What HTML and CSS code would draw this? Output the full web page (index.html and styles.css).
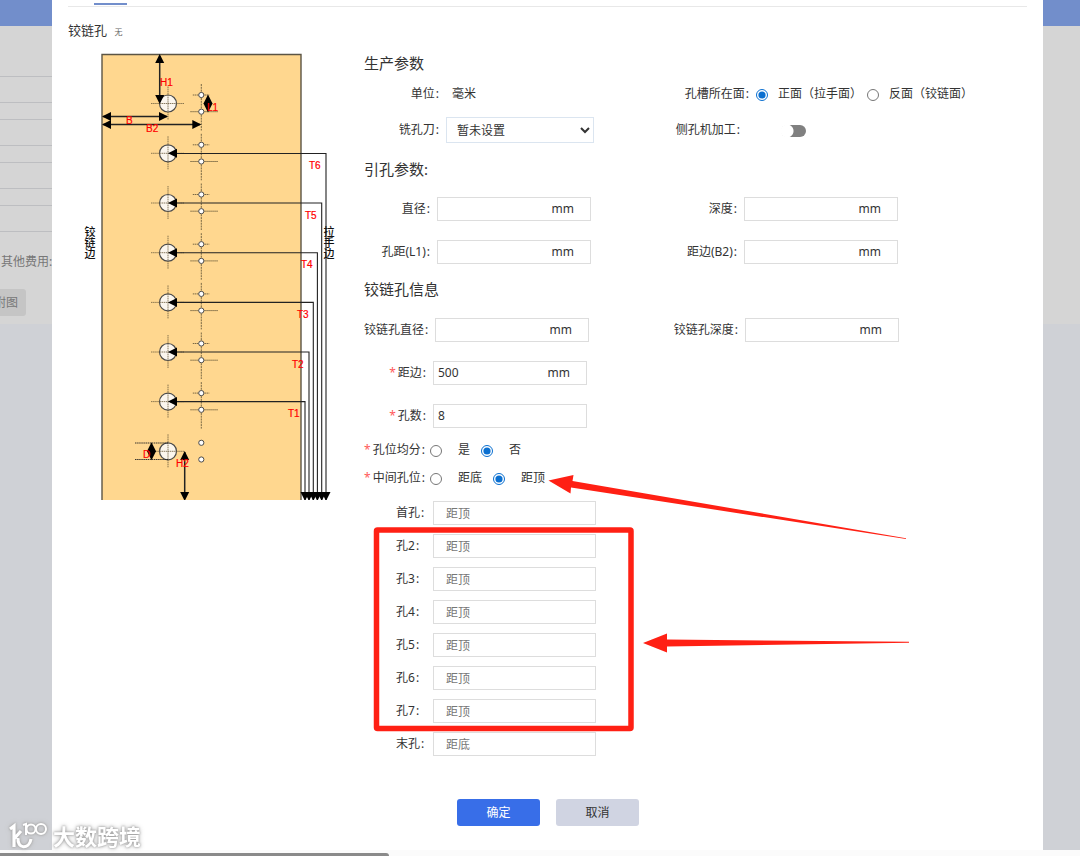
FILE: index.html
```html
<!DOCTYPE html>
<html lang="zh-CN">
<head>
<meta charset="utf-8">
<title>铰链孔</title>
<link rel="stylesheet" href="styles.css">
</head>
<body>
<div class="page">
  <aside class="backdrop backdrop-left">
    <div class="topbar"></div>
    <div class="sheet">
      <div class="line tall"></div><div class="line mid"></div><div class="line low"></div><div class="line mid"></div>
      <div class="line low"></div><div class="line mid"></div><div class="line low"></div><div class="line mid"></div>
      <p class="fees">其他费用:</p>
      <button class="attach" type="button">附图</button>
    </div>
  </aside>

  <main class="modal">
    <div class="tabs"><span class="tab-active"></span></div>
    <h1 class="title">铰链孔 <small>无</small></h1>
    <div class="body">
      <svg class="diagram" viewBox="80 50 260 450" role="img" aria-label="铰链孔示意图">
        <defs>
          <g id="cross"><circle r="8.5" fill="#fbf6ee" stroke="#4a4a4a" stroke-width="1.2"/><path d="M-17 0H16M0-17V16" stroke="#6b5c3c" stroke-width=".8" stroke-dasharray="1.5 .6" fill="none"/></g>
          <g id="dots" fill="#fff" stroke="#4a4a4a"><circle cy="-8.5" r="2.6"/><circle cy="8.2" r="2.6"/></g>
          <g id="axes" stroke="#6b5c3c" stroke-width=".9" fill="none"><path d="M0-19.500V27" stroke-dasharray="2 .8"/><path d="M-8.500-8.500H8M-11 8.200H17" stroke-dasharray="1.500 .5"/></g>
          <path id="left" d="M0 0L9-4.500V4.500Z"/>
          <path id="right" d="M0 0L-9-4.500V4.500Z"/>
          <path id="up" d="M0 0L-4.500 9H4.500Z"/>
          <path id="down" d="M0 0L-4.500-9H4.500Z"/>
          <path id="diamond" d="M0-9L4.500 0L0 9L-4.500 0Z"/>
        </defs>
        <path d="M102 500V54.500H301V500" fill="#ffd78f" stroke="#5c5545" stroke-width="1.400"/>
        <use href="#cross" x="168" y="103.500"/><use href="#cross" x="168" y="153.300"/><use href="#cross" x="168" y="203"/><use href="#cross" x="168" y="252.700"/>
        <use href="#cross" x="168" y="302.400"/><use href="#cross" x="168" y="352"/><use href="#cross" x="168" y="401.600"/><use href="#cross" x="168" y="451.300"/>
        <use href="#axes" x="201.300" y="103.500"/><use href="#axes" x="201.300" y="153.300"/><use href="#axes" x="201.300" y="203"/><use href="#axes" x="201.300" y="252.700"/>
        <use href="#axes" x="201.300" y="302.400"/><use href="#axes" x="201.300" y="352"/><use href="#axes" x="201.300" y="401.600"/>
        <use href="#dots" x="201.300" y="103.500"/><use href="#dots" x="201.300" y="153.300"/><use href="#dots" x="201.300" y="203"/><use href="#dots" x="201.300" y="252.700"/>
        <use href="#dots" x="201.300" y="302.400"/><use href="#dots" x="201.300" y="352"/><use href="#dots" x="201.300" y="401.600"/><use href="#dots" x="201.300" y="451.300"/>
        <g fill="none" stroke="#222" stroke-width="1.100">
          <path d="M170 153.500H326V500M170 203H321.700V500M170 252.700H317.400V500M170 302.400H313.300V500M170 352H309V500M170 401.600H305V500"/>
          <path d="M159.700 56V102M103 116.400H167M103 124.500H200M184.700 452V498" stroke-width="1.500"/>
          <path d="M135 443H168M135 459.500H168" stroke-width=".9" stroke-dasharray="1.500 .6"/>
        </g>
        <use href="#left" x="168" y="153.300"/><use href="#left" x="168" y="203"/><use href="#left" x="168" y="252.700"/><use href="#left" x="168" y="302.400"/><use href="#left" x="168" y="352"/><use href="#left" x="168" y="401.600"/>
        <use href="#down" x="326" y="501"/><use href="#down" x="321.700" y="501"/><use href="#down" x="317.400" y="501"/><use href="#down" x="313.300" y="501"/><use href="#down" x="309" y="501"/><use href="#down" x="305" y="501"/>
        <use href="#up" x="159.700" y="54"/><use href="#down" x="159.700" y="104"/>
        <use href="#left" x="102" y="116.400"/><use href="#right" x="168" y="116.400"/>
        <use href="#left" x="102" y="124.500"/><use href="#right" x="201.300" y="124.500"/>
        <use href="#up" x="184.700" y="451"/><use href="#down" x="184.700" y="501"/>
        <use href="#diamond" x="208" y="103.500"/><use href="#diamond" x="151.500" y="451.300"/>
        <g class="dim">
          <text x="160" y="86">H1</text><text x="207" y="111">L1</text><text x="126" y="124">B</text><text x="146" y="132">B2</text>
          <text x="309" y="169">T6</text><text x="305" y="219">T5</text><text x="301" y="268">T4</text><text x="297" y="318">T3</text><text x="292" y="368">T2</text><text x="288" y="417">T1</text>
          <text x="143" y="458">D</text><text x="176" y="467">H2</text>
        </g>
        <g class="edge"><text x="90" y="226">铰链边</text><text x="329" y="226">拉手边</text></g>
      </svg>

      <form class="form">
        <section class="production">
          <h2>生产参数</h2>
          <div class="pair">
            <div class="field"><span class="label">单位<i>:</i></span><span class="value">毫米</span></div>
            <div class="field" role="radiogroup" aria-label="孔槽所在面">
              <span class="label">孔槽所在面<i>:</i></span>
              <label class="choice tight"><input type="radio" name="face" checked>正面（拉手面）</label>
              <label class="choice tight"><input type="radio" name="face">反面（铰链面）</label>
            </div>
          </div>
          <div class="pair tool-row">
            <div class="field"><label class="label" for="tool">铣孔刀<i>:</i></label><select id="tool"><option>暂未设置</option></select></div>
            <div class="field side"><label class="label" for="side">侧孔机加工<i>:</i></label><input class="switch" id="side" type="checkbox"></div>
          </div>
        </section>

        <section class="pilot">
          <h2>引孔参数:</h2>
          <div class="pair">
            <div class="field"><label class="label" for="dia">直径<i>:</i></label><span class="box"><input id="dia" type="text"><b>mm</b></span></div>
            <div class="field"><label class="label" for="depth">深度<i>:</i></label><span class="box"><input id="depth" type="text"><b>mm</b></span></div>
          </div>
          <div class="pair">
            <div class="field"><label class="label" for="l1">孔距(L1)<i>:</i></label><span class="box"><input id="l1" type="text"><b>mm</b></span></div>
            <div class="field"><label class="label" for="b2">距边(B2)<i>:</i></label><span class="box"><input id="b2" type="text"><b>mm</b></span></div>
          </div>
        </section>

        <section class="hinge">
          <h2>铰链孔信息</h2>
          <div class="pair">
            <div class="field"><label class="label" for="hdia">铰链孔直径<i>:</i></label><span class="box"><input id="hdia" type="text"><b>mm</b></span></div>
            <div class="field"><label class="label" for="hdepth">铰链孔深度<i>:</i></label><span class="box"><input id="hdepth" type="text"><b>mm</b></span></div>
          </div>
          <div class="field"><label class="label" for="margin"><em>*</em>距边<i>:</i></label><span class="box"><input id="margin" type="text" value="500"><b>mm</b></span></div>
          <div class="field"><label class="label" for="count"><em>*</em>孔数<i>:</i></label><span class="box"><input id="count" type="text" value="8"></span></div>
        </section>

        <section class="options">
          <div class="field" role="radiogroup" aria-label="孔位均分">
            <span class="label"><em>*</em>孔位均分<i>:</i></span>
            <label class="choice"><input type="radio" name="even">是</label>
            <label class="choice"><input type="radio" name="even" checked>否</label>
          </div>
          <div class="field" role="radiogroup" aria-label="中间孔位">
            <span class="label"><em>*</em>中间孔位<i>:</i></span>
            <label class="choice"><input type="radio" name="middle">距底</label>
            <label class="choice"><input type="radio" name="middle" checked>距顶</label>
          </div>
        </section>

        <section class="holes">
          <div class="field"><label class="label" for="h1">首孔<i>:</i></label><input id="h1" type="text" placeholder="距顶"></div>
          <div class="field"><label class="label" for="h2">孔2<i>:</i></label><input id="h2" type="text" placeholder="距顶"></div>
          <div class="field"><label class="label" for="h3">孔3<i>:</i></label><input id="h3" type="text" placeholder="距顶"></div>
          <div class="field"><label class="label" for="h4">孔4<i>:</i></label><input id="h4" type="text" placeholder="距顶"></div>
          <div class="field"><label class="label" for="h5">孔5<i>:</i></label><input id="h5" type="text" placeholder="距顶"></div>
          <div class="field"><label class="label" for="h6">孔6<i>:</i></label><input id="h6" type="text" placeholder="距顶"></div>
          <div class="field"><label class="label" for="h7">孔7<i>:</i></label><input id="h7" type="text" placeholder="距顶"></div>
          <div class="field"><label class="label" for="h8">末孔<i>:</i></label><input id="h8" type="text" placeholder="距底"></div>
        </section>

        <div class="actions">
          <button class="ok" type="button">确定</button>
          <button class="cancel" type="button">取消</button>
        </div>

        <svg class="marks" viewBox="364 50 560 700" aria-hidden="true">
          <rect x="376.500" y="530" width="254.500" height="198.500" rx="1" fill="none" stroke="#ff2014" stroke-width="5.500" stroke-linejoin="round"/>
          <path fill="#ff2014" d="M548.500 480.500L573.500 475L572.500 481L906 538.200V539L571 487.500L570.500 493.500Z"/>
          <path fill="#ff2014" d="M643 643L667 633.500V639.500L909 641.800V642.800L667 646.500V652.500Z"/>
        </svg>
      </form>
    </div>
  </main>

  <aside class="backdrop backdrop-right"><div class="topbar"></div><div class="sheet"></div></aside>
  <div class="scrollbar"><div class="thumb"></div></div>

  <div class="watermark">
    <svg viewBox="0 0 40 30" aria-hidden="true">
      <path d="M2 8L6 5V26M6 18L13 10M10 17C9 28 21 29 23 18" fill="none" stroke="#fff" stroke-width="3.200"/>
      <path d="M15 4L18 3V14" fill="none" stroke="#fff" stroke-width="2"/>
      <circle cx="23" cy="8" r="4.500" fill="none" stroke="#fff" stroke-width="2"/>
      <circle cx="33" cy="8" r="5" fill="none" stroke="#fff" stroke-width="2"/>
    </svg>
    <span>大数跨境</span>
  </div>
</div>
</body>
</html>
```
FILE: styles.css
```css
* { box-sizing: border-box; }

body {
  margin: 0;
  background: #fbfbfb;
  color: #333;
  font: 12px/16px "Noto Sans", "Noto Sans CJK SC", sans-serif;
}

button, input, select { font: inherit; color: inherit; }
h1, h2, p { margin: 0; font-weight: 400; }
i, em { font-style: normal; }

.page {
  position: relative;
  display: grid;
  grid-template-columns: 52px 1fr 37px;
  grid-template-rows: 1fr auto;
  min-height: 100vh;
  overflow: hidden;
}

/* Dimmed page behind the dialog */
.backdrop { background: #cfd1d6; overflow: hidden; }
.topbar { height: 26px; background: #728ecb; }
.sheet { height: 298px; background: #d5d5d5; color: #777; }
.line { border-bottom: 1px solid #bdbec1; }
.tall { height: 51px; }
.mid { height: 26px; }
.low { height: 17px; }
.fees { padding: 22px 0 0 1px; white-space: nowrap; }
.attach {
  height: 27px;
  margin: 19px 0 0 -14px;
  padding: 0 8px;
  border: 0;
  border-radius: 3px;
  background: #c5c5c5;
}

/* Dialog */
.modal { background: #fff; padding: 0 16px 24px; }
.tabs { height: 7px; padding: 3px 0 0 26px; border-bottom: 1px solid #e8e8e8; }
.tab-active { display: block; width: 33px; height: 2px; background: #728ecb; }
.title { padding-top: 13px; font-size: 13px; line-height: 20px; }
.title small { margin-left: 4px; font-size: 8px; color: #666; }
.body { display: flex; gap: 24px; padding: 8px 0 0 12px; align-items: flex-start; }
.diagram { width: 260px; flex: none; }
.dim { font: 10px "Liberation Sans", sans-serif; fill: #f00; stroke: #f00; stroke-width: .2; }
.edge { font: 500 11px "Noto Sans CJK SC", sans-serif; fill: #111; writing-mode: vertical-rl; }

.form { position: relative; flex: 1; padding-top: 1px; }
h2 { font-size: 15px; line-height: 24px; }
.pair { display: grid; grid-template-columns: 303px 1fr; }
.field { display: flex; align-items: center; }
.label { flex: none; padding-right: 7px; text-align: right; white-space: nowrap; }
.label i { margin-left: 1px; }
.label em { margin-right: 2px; color: #ff5a5a; }

select, .box, .holes input { height: 24px; border: 1px solid #ddd; background: #fff; }
.box { display: flex; align-items: center; width: 154px; padding: 0 16px 0 4px; }
.box input { flex: 1; min-width: 0; padding: 0; border: 0; outline: 0; background: none; }
.box b { font-weight: 400; }
select { width: 148px; height: 26px; padding: 0 0 0 6px; border-color: #dbe5f0; }

.production .pair { margin-top: 7px; min-height: 24px; }
.production .tool-row { margin-top: 11px; }
.production .label { width: 82px; }
.production .field + .field .label { width: 89px; }
.production .field.side .label { width: 80px; }
.value { padding-left: 6px; }
.switch {
  appearance: none;
  width: 25px;
  height: 12px;
  margin: 2px 0 0 34px;
  border-radius: 6px;
  background: radial-gradient(circle at 6px 6px, #fff 6px, #808080 7px);
}

.pilot { margin-top: 14px; }
.pilot .pair { margin-top: 16px; }
.pilot .pair + .pair { margin-top: 19px; }
.pilot .label { width: 73px; }
.pilot .field + .field .label { width: 77px; }

.hinge { margin-top: 13px; }
.hinge .pair { margin-top: 17px; }
.hinge > .field { margin-top: 19px; }
.hinge .label { width: 69px; }
.hinge .pair .label { width: 71px; }
.hinge .pair .field + .field .label { width: 78px; }

.options { display: grid; gap: 4px; margin-top: 10px; }
.options .field { height: 24px; }
.options .label { width: 66px; padding-right: 6px; }

.choice { display: flex; align-items: center; gap: 16px; margin-right: 11px; white-space: nowrap; }
.choice.tight { gap: 10px; margin-right: 5px; }
.choice input { width: 12px; height: 12px; margin: 2px 0 0; accent-color: #0a6fd0; }

.holes { display: grid; gap: 9px; margin-top: 11px; }
.holes .label { width: 69px; padding-left: 32px; text-align: left; }
.holes input { width: 163px; padding: 0 12px; }
.holes input::placeholder { color: #777; }

.actions { display: flex; gap: 16px; margin-top: 43px; padding-left: 93px; }
.actions button { width: 83px; height: 27px; border: 0; border-radius: 3px; }
.actions .ok { background: #386ee8; color: #fff; }
.actions .cancel { background: #d0d4e2; }

.marks { position: absolute; left: 0; top: 0; width: 560px; height: 700px; pointer-events: none; }

.scrollbar { grid-column: 1 / -1; height: 6px; padding-top: 3px; background: #fbfbfb; }
.thumb { width: 36%; height: 3px; border-radius: 0 3px 0 0; background: #8a8a8a; }

.watermark {
  position: absolute;
  left: 8px;
  bottom: 4px;
  display: flex;
  align-items: center;
  gap: 5px;
  color: #fff;
  font-size: 22px;
  font-weight: 700;
  line-height: 32px;
  filter: drop-shadow(0 0 1px #999) drop-shadow(0 0 2px #bbb);
}
.watermark svg { width: 40px; height: 30px; }
```
